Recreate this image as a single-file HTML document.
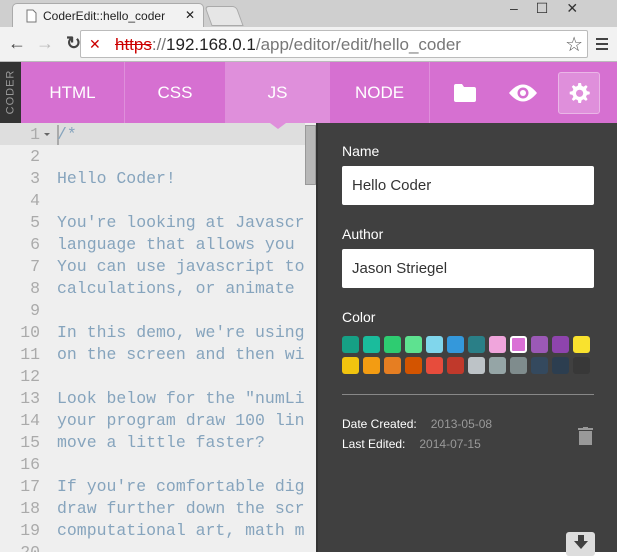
<!DOCTYPE html>
<html><head><style>
*{margin:0;padding:0;box-sizing:border-box}
body{width:617px;height:552px;overflow:hidden;background:#fff;font-family:"Liberation Sans",sans-serif;position:relative}
.abs{position:absolute}
#tabs{left:0;top:0;width:617px;height:27px;background:#cfcfcf}
#tab{left:12px;top:3px;width:192px;height:25px;background:#f2f2f2;border:1px solid #aaa;border-bottom:none;border-radius:5px 5px 0 0;font-size:12px;color:#222;padding:5px 0 0 30px;white-space:nowrap}
#toolbar{left:0;top:27px;width:617px;height:35px;background:#f2f2f2;border-bottom:1px solid #bbb}
#url{left:80px;top:30px;width:508px;height:28px;background:#fff;border:1px solid #bbb;border-radius:2px;font-size:17px;padding:4px 0 0 34px;color:#777}
#bar{left:0;top:62px;width:617px;height:61px;background:#d670d1}
#coder{left:0;top:62px;width:21px;height:61px;background:#333;color:#999;font-size:11px;letter-spacing:1px}
.t{top:62px;height:61px;color:#fff;font-size:17px;text-align:center;line-height:61px;border-right:1px solid #df8fdb}
#editor{left:0;top:123px;width:318px;height:429px;background:#efefef;overflow:hidden}
.ln{position:absolute;left:0;width:40px;text-align:right;font-family:"Liberation Mono",monospace;font-size:16.5px;color:#aaa}
.cd{position:absolute;left:57px;white-space:pre;font-family:"Liberation Mono",monospace;font-size:16.5px;color:#86a4bd}
#panel{left:318px;top:123px;width:299px;height:429px;background:#404040;color:#fff}
.lbl{position:absolute;left:24px;font-size:14px;color:#fff}
.inp{position:absolute;left:24px;width:252px;height:39px;background:#fff;border-radius:2px;color:#333;font-size:15px;padding:11px 0 0 10px}
.sw{position:absolute;width:17px;height:17px;border-radius:3px}
</style></head><body>
<div class="abs" id="tabs"></div>
<div class="abs" id="tab">CoderEdit::hello_coder<span style="position:absolute;left:172px;top:4px;font-size:12px">✕</span>
<svg class="abs" style="left:13px;top:5px" width="11" height="14"><path d="M1 1h6l3 3v9H1z" fill="#fff" stroke="#777"/></svg></div>
<div class="abs" style="left:208px;top:6px;width:32px;height:20px;background:#e6e6e6;border:1px solid #aaa;border-radius:4px 4px 0 0;transform:skewX(20deg)"></div>
<div class="abs" style="left:510px;top:0;font-size:14px;color:#333;letter-spacing:18px">‒☐✕</div>
<div class="abs" id="toolbar"></div>
<div class="abs" style="left:8px;top:33px;font-size:18px;color:#444">←</div>
<div class="abs" style="left:36px;top:33px;font-size:18px;color:#bbb">→</div>
<div class="abs" style="left:66px;top:33px;font-size:18px;color:#444;font-weight:bold">↻</div>
<div class="abs" id="url"><span style="color:#c00;text-decoration:line-through">https</span>://<span style="color:#222">192.168.0.1</span>/app/editor/edit/hello_coder
<span class="abs" style="left:8px;top:5px;color:#c00;font-size:14px">✕</span>
<span class="abs" style="right:4px;top:1px;color:#555;font-size:20px">☆</span></div>
<div class="abs" style="left:596px;top:38px;width:12px;height:12px;border-top:2px solid #444;border-bottom:2px solid #444"><div style="margin-top:3px;height:2px;background:#444"></div></div>
<div class="abs" id="bar"></div>
<div class="abs" id="coder"><div style="transform:rotate(-90deg);position:absolute;left:-12px;top:24px;width:45px;text-align:center">CODER</div></div>
<div class="abs t" style="left:21px;width:104px">HTML</div>
<div class="abs t" style="left:125px;width:101px">CSS</div>
<div class="abs t" style="left:226px;width:104px;background:#df8fdb">JS</div>
<div class="abs" style="left:270px;top:123px;width:0;height:0;border-left:8px solid transparent;border-right:8px solid transparent;border-top:6px solid #df8fdb;z-index:3"></div>
<div class="abs t" style="left:330px;width:100px">NODE</div>
<svg class="abs" style="left:454px;top:84px" width="22" height="18"><path d="M0 2q0-2 2-2h6l2 3h10q2 0 2 2v11q0 2-2 2H2q-2 0-2-2z" fill="#fff"/></svg>
<svg class="abs" style="left:508px;top:82px" width="30" height="22"><path d="M1 11Q15-6 29 11Q15 28 1 11z" fill="#fff"/><circle cx="15" cy="11" r="5.5" fill="#d670d1"/><circle cx="15" cy="11" r="3" fill="#fff"/></svg>
<div class="abs" style="left:558px;top:72px;width:42px;height:42px;border:1px solid #eab6e7;border-radius:3px;background:#df8fdb"></div>
<svg class="abs" style="left:567px;top:81px" width="24" height="24" viewBox="0 0 24 24"><path d="M12 2l2 0 .6 2.8 2 .9 2.4-1.6 1.6 1.6-1.6 2.4.9 2 2.8.6v2.6l-2.8.6-.9 2 1.6 2.4-1.6 1.6-2.4-1.6-2 .9-.6 2.8h-2.6l-.6-2.8-2-.9-2.4 1.6-1.6-1.6 1.6-2.4-.9-2-2.8-.6v-2.6l2.8-.6.9-2-1.6-2.4 1.6-1.6 2.4 1.6 2-.9.6-2.8z" fill="#fff"/><circle cx="12.6" cy="12.3" r="3.6" fill="#df8fdb"/></svg>
<div class="abs" id="editor">
<div class="abs" style="left:0;top:0;width:305px;height:22px;background:#dedede"></div>
<div class="abs" style="left:57px;top:2px;width:2px;height:20px;background:#aaa"></div>
<div class="abs" style="left:305px;top:2px;width:11px;height:60px;background:#b8b8b8;border:1px solid #999"></div>
<div class="abs" style="left:316px;top:0;width:2px;height:429px;background:#333"></div>
<div class="abs" style="left:0;top:0;width:305px;height:429px;overflow:hidden">
<div style="position:absolute;left:44px;top:10px;border-left:3px solid transparent;border-right:3px solid transparent;border-top:3px solid #666"></div>
<div style="position:absolute;top:1px;left:0;line-height:22px">
<div class="ln" style="top:0">1</div><div class="ln" style="top:22px">2</div><div class="ln" style="top:44px">3</div><div class="ln" style="top:66px">4</div><div class="ln" style="top:88px">5</div><div class="ln" style="top:110px">6</div><div class="ln" style="top:132px">7</div><div class="ln" style="top:154px">8</div><div class="ln" style="top:176px">9</div><div class="ln" style="top:198px">10</div><div class="ln" style="top:220px">11</div><div class="ln" style="top:242px">12</div><div class="ln" style="top:264px">13</div><div class="ln" style="top:286px">14</div><div class="ln" style="top:308px">15</div><div class="ln" style="top:330px">16</div><div class="ln" style="top:352px">17</div><div class="ln" style="top:374px">18</div><div class="ln" style="top:396px">19</div><div class="ln" style="top:418px">20</div>
<div class="cd" style="top:0">/*</div>
<div class="cd" style="top:44px">Hello Coder!</div>
<div class="cd" style="top:88px">You're looking at Javascript</div>
<div class="cd" style="top:110px">language that allows you to</div>
<div class="cd" style="top:132px">You can use javascript to do</div>
<div class="cd" style="top:154px">calculations, or animate the</div>
<div class="cd" style="top:198px">In this demo, we're using it</div>
<div class="cd" style="top:220px">on the screen and then with</div>
<div class="cd" style="top:264px">Look below for the "numLines"</div>
<div class="cd" style="top:286px">your program draw 100 lines</div>
<div class="cd" style="top:308px">move a little faster?</div>
<div class="cd" style="top:352px">If you're comfortable digging</div>
<div class="cd" style="top:374px">draw further down the screen</div>
<div class="cd" style="top:396px">computational art, math models</div>
</div></div></div>
<div class="abs" id="panel">
<div class="lbl" style="top:20px">Name</div>
<div class="inp" style="top:43px">Hello Coder</div>
<div class="lbl" style="top:103px">Author</div>
<div class="inp" style="top:126px">Jason Striegel</div>
<div class="lbl" style="top:186px">Color</div>
<div class="sw" style="left:24px;top:213px;background:#16a085"></div><div class="sw" style="left:45px;top:213px;background:#1abc9c"></div><div class="sw" style="left:66px;top:213px;background:#2ecc71"></div><div class="sw" style="left:87px;top:213px;background:#5ee290"></div><div class="sw" style="left:108px;top:213px;background:#80d6ec"></div><div class="sw" style="left:129px;top:213px;background:#3498db"></div><div class="sw" style="left:150px;top:213px;background:#2a7f87"></div><div class="sw" style="left:171px;top:213px;background:#f0a5dc"></div><div class="sw" style="left:192px;top:213px;background:#da70d6;border:2px solid #fff"></div><div class="sw" style="left:213px;top:213px;background:#9b59b6"></div><div class="sw" style="left:234px;top:213px;background:#8e44ad"></div><div class="sw" style="left:255px;top:213px;background:#f9e22e"></div>
<div class="sw" style="left:24px;top:234px;background:#f1c40f"></div><div class="sw" style="left:45px;top:234px;background:#f39c12"></div><div class="sw" style="left:66px;top:234px;background:#e67e22"></div><div class="sw" style="left:87px;top:234px;background:#d35400"></div><div class="sw" style="left:108px;top:234px;background:#e74c3c"></div><div class="sw" style="left:129px;top:234px;background:#c0392b"></div><div class="sw" style="left:150px;top:234px;background:#bdc3c7"></div><div class="sw" style="left:171px;top:234px;background:#95a5a6"></div><div class="sw" style="left:192px;top:234px;background:#7f8c8d"></div><div class="sw" style="left:213px;top:234px;background:#34495e"></div><div class="sw" style="left:234px;top:234px;background:#2c3e50"></div><div class="sw" style="left:255px;top:234px;background:#383838"></div>
<div class="abs" style="left:24px;top:271px;width:252px;height:1px;background:#888"></div>
<div class="abs" style="left:24px;top:294px;font-size:12px">Date Created:<span style="color:#999;margin-left:14px">2013-05-08</span></div>
<div class="abs" style="left:24px;top:314px;font-size:12px">Last Edited:<span style="color:#999;margin-left:14px">2014-07-15</span></div>
<svg class="abs" style="left:260px;top:304px" width="16" height="18"><rect x="0" y="1" width="15" height="2" fill="#999"/><rect x="5" y="0" width="5" height="2" fill="#999"/><rect x="1" y="4" width="13" height="14" fill="#999"/></svg>
<div class="abs" style="left:248px;top:409px;width:29px;height:24px;background:#ddd;border-radius:3px"></div>
<svg class="abs" style="left:253px;top:412px" width="20" height="17"><path d="M7 0h6v6h4l-7 8-7-8h4z" fill="#404040"/></svg>
</div>
</body></html>
